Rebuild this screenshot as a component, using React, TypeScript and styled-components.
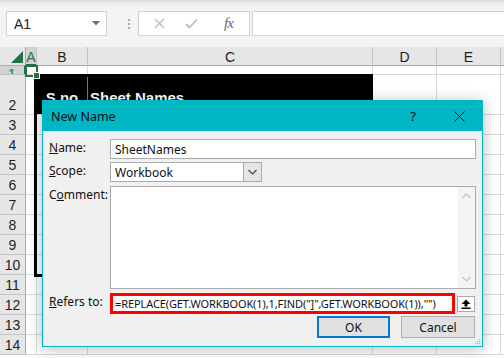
import { Fragment } from 'react'
import styled, { createGlobalStyle, css } from 'styled-components'

const GlobalStyle = createGlobalStyle`
  html, body { margin: 0; padding: 0; }
  body {
    width: 504px;
    height: 358px;
    overflow: hidden;
    background: #ffffff;
    font-family: "Noto Sans", "Liberation Sans", sans-serif;
  }
`

const green = '#217346'
const teal = '#00b7c3'
const uiFont = `"Noto Sans", "Liberation Sans", sans-serif`
const cellFont = `"Liberation Sans", "Noto Sans", sans-serif`

const Window = styled.div`
  position: relative;
  width: 504px;
  height: 358px;
  overflow: hidden;
  display: flex;
  flex-direction: column;
`

/* ---------- formula bar ---------- */

const Toolbar = styled.div`
  flex: none;
  height: 47px;
  box-sizing: border-box;
  display: flex;
  align-items: flex-start;
  padding: 11px 0 0 6px;
  background: linear-gradient(#d6d6d6 0, #ececec 3px, #f3f3f3 7px);
`

const NameBox = styled.div`
  width: 101px;
  height: 25px;
  box-sizing: border-box;
  border: 1px solid #d2d2d2;
  background: #fff;
  display: flex;
  align-items: center;
  justify-content: space-between;
  padding: 0 6px 0 7px;
  font-family: ${cellFont};
  font-size: 14px;
  color: #222;
`

const Grip = styled.div`
  width: 15px;
  height: 25px;
  margin: 0 0 0 14px;
  display: flex;
  flex-direction: column;
  justify-content: center;
  align-items: center;
  gap: 2px;
  & > span {
    width: 2px;
    height: 2px;
    background: #a8a8a8;
  }
`

const FxBox = styled.div`
  width: 112px;
  height: 25px;
  margin-left: 2px;
  box-sizing: border-box;
  border: 1px solid #d2d2d2;
  background: #fff;
  display: flex;
  align-items: center;
  padding-left: 15px;
  gap: 20px;
`

const FxText = styled.span`
  font-family: "Liberation Serif", serif;
  font-style: italic;
  font-size: 15px;
  color: #6a6a6a;
  margin-left: 6px;
  letter-spacing: -1px;
`

const FormulaInput = styled.div`
  flex: 1;
  height: 25px;
  margin-left: 2px;
  box-sizing: border-box;
  border: 1px solid #d2d2d2;
  border-right: none;
  background: #fff;
`

/* ---------- sheet grid ---------- */

const Sheet = styled.div`
  flex: 1;
  display: grid;
  grid-template-columns: 26px 11px 51px 285px 64px 64px 1fr;
  grid-template-rows: 19px 9px 40px repeat(13, 20px);
  overflow: hidden;
  font-family: ${cellFont};
`

const Corner = styled.div`
  grid-row: 1;
  grid-column: 1;
  background: #e6e6e6;
  border-right: 1px solid #ababab;
  border-bottom: 1px solid #ababab;
  box-sizing: border-box;
  display: flex;
  align-items: flex-end;
  justify-content: flex-end;
  padding: 0 2px 2px 0;
`

const ColHead = styled.div<{ $c: number; $active?: boolean }>`
  grid-row: 1;
  grid-column: ${({ $c }) => $c};
  box-sizing: border-box;
  background: ${({ $active }) => ($active ? '#d2d2d2' : '#e6e6e6')};
  border-right: 1px solid #c4c4c4;
  border-bottom: ${({ $active }) => ($active ? `2px solid ${green}` : '1px solid #ababab')};
  color: ${({ $active }) => ($active ? green : '#1e1e1e')};
  font-size: 14px;
  display: flex;
  align-items: center;
  justify-content: center;
  padding-top: 2px;
  overflow: hidden;
`

const RowHead = styled.div<{ $r: number; $active?: boolean }>`
  grid-row: ${({ $r }) => $r};
  grid-column: 1;
  box-sizing: border-box;
  background: ${({ $active }) => ($active ? '#d2d2d2' : '#e6e6e6')};
  border-right: ${({ $active }) => ($active ? `2px solid ${green}` : '1px solid #ababab')};
  border-bottom: 1px solid #c4c4c4;
  color: ${({ $active }) => ($active ? green : '#1e1e1e')};
  font-size: 14px;
  display: flex;
  align-items: ${({ $active }) => ($active ? 'flex-start' : 'flex-end')};
  justify-content: center;
  padding-bottom: 1px;
  line-height: 16px;
  overflow: hidden;
`

const Cell = styled.div<{ $r: number; $c: number; $dark?: boolean; $center?: boolean }>`
  grid-row: ${({ $r }) => $r};
  grid-column: ${({ $c }) => $c};
  box-sizing: border-box;
  border-right: 1px solid ${({ $dark }) => ($dark ? '#7a7a7a' : '#dadada')};
  border-bottom: 1px solid #dadada;
  display: flex;
  align-items: flex-end;
  justify-content: ${({ $center }) => ($center ? 'center' : 'flex-start')};
  padding: 0 2px;
  overflow: hidden;
  white-space: nowrap;
  ${({ $dark }) =>
    $dark &&
    css`
      background: #000;
      color: #fff;
      font-weight: bold;
      font-size: 15px;
      line-height: 18px;
      padding-bottom: 7px;
    `}
`

const TableFrame = styled.div`
  grid-row: 3 / 12;
  grid-column: 3 / 5;
  margin: -1px 0 -2px -3px;
  border: 3px solid #000;
  border-right-width: 1px;
  pointer-events: none;
  z-index: 1;
`

const Selection = styled.div`
  grid-row: 2 / 3;
  grid-column: 2 / 3;
  margin: -1px -1px -2px -1px;
  border: 2px solid ${green};
  position: relative;
  z-index: 2;
`

const FillHandle = styled.span`
  position: absolute;
  right: -4px;
  bottom: -4px;
  width: 5px;
  height: 5px;
  background: ${green};
  border: 1px solid #fff;
`

/* ---------- dialog ---------- */

const Dialog = styled.div`
  position: absolute;
  left: 42px;
  top: 100px;
  width: 441px;
  height: 247px;
  box-sizing: border-box;
  border: 1px solid ${teal};
  background: #f0f0f0;
  box-shadow: 0 2px 14px rgba(0, 0, 0, 0.28);
  display: flex;
  flex-direction: column;
  font-family: ${uiFont};
  font-size: 12px;
  color: #000;
  z-index: 5;
`

const TitleBar = styled.div`
  height: 30px;
  flex: none;
  background: ${teal};
  display: flex;
  align-items: center;
  padding-left: 8px;
  font-size: 12.5px;
`

const Title = styled.span`
  flex: 1;
  color: #0c0c0c;
`

const TitleButton = styled.div`
  width: 46px;
  height: 30px;
  display: flex;
  align-items: center;
  justify-content: center;
  font-size: 13px;
  color: #111;
`

const Body = styled.div`
  flex: 1;
  display: flex;
  flex-direction: column;
  padding: 8px 6px 0 6px;
`

const FieldRow = styled.div<{ $top: number }>`
  display: flex;
  align-items: flex-start;
  margin-top: ${({ $top }) => $top}px;
`

const Label = styled.label<{ $pad?: number }>`
  width: 61px;
  flex: none;
  padding-top: ${({ $pad }) => $pad ?? 1}px;
  line-height: 16px;
  color: #111;
`

const TextBox = styled.div<{ $height?: number; $alert?: boolean }>`
  flex: 1;
  height: ${({ $height }) => $height ?? 20}px;
  box-sizing: border-box;
  border: ${({ $alert }) => ($alert ? '3px solid #ff0000' : '1px solid #ababab')};
  background: #fff;
  display: flex;
  align-items: center;
  padding-left: ${({ $alert }) => ($alert ? 2 : 4)}px;
  white-space: nowrap;
  overflow: hidden;
  color: #111;
  ${({ $alert }) =>
    $alert &&
    css`
      font-size: 11px;
      letter-spacing: -0.1px;
    `}
`

const Select = styled.div`
  width: 152px;
  height: 20px;
  box-sizing: border-box;
  border: 1px solid #ababab;
  background: #fff;
  display: flex;
  align-items: stretch;
`

const SelectValue = styled.span`
  flex: 1;
  display: flex;
  align-items: center;
  padding-left: 4px;
  color: #111;
`

const SelectButton = styled.span`
  width: 17px;
  background: #e5e5e5;
  border-left: 1px solid #ababab;
  display: flex;
  align-items: center;
  justify-content: center;
`

const Comment = styled.div`
  flex: 1;
  height: 103px;
  box-sizing: border-box;
  border: 1px solid #ababab;
  background: #fff;
  display: flex;
  justify-content: flex-end;
`

const ScrollBar = styled.div`
  width: 17px;
  background: #f4f4f4;
  display: flex;
  flex-direction: column;
  justify-content: space-between;
  align-items: center;
  padding: 6px 0;
`

const CollapseButton = styled.div`
  width: 18px;
  height: 16px;
  margin: 3px 1px 0 2px;
  box-sizing: border-box;
  border: 1px solid #ababab;
  background: #fdfdfd;
  display: flex;
  align-items: center;
  justify-content: center;
`

const ButtonRow = styled.div`
  display: flex;
  justify-content: flex-end;
  gap: 11px;
  margin: 2px 1px 0 0;
`

const Button = styled.div<{ $primary?: boolean }>`
  width: ${({ $primary }) => ($primary ? 73 : 74)}px;
  height: 22px;
  box-sizing: border-box;
  background: #e1e1e1;
  border: ${({ $primary }) => ($primary ? '2px solid #0078d7' : '1px solid #adadad')};
  display: flex;
  align-items: center;
  justify-content: center;
  color: #111;
`

const ResizeGrip = styled.svg`
  position: absolute;
  right: 1px;
  bottom: 1px;
`

const columns = ['A', 'B', 'C', 'D', 'E', '']
const rowNumbers = Array.from({ length: 13 }, (_, i) => i + 2)

function Chevron({ up, color }: { up?: boolean; color: string }) {
  return (
    <svg width="9" height="6" viewBox="0 0 9 6">
      <path
        d={up ? 'M0.5 5 L4.5 1 L8.5 5' : 'M0.5 1 L4.5 5 L8.5 1'}
        fill="none"
        stroke={color}
        strokeWidth="1.2"
      />
    </svg>
  )
}

export default function App() {
  return (
    <Window>
      <GlobalStyle />
      <Toolbar>
        <NameBox>
          <span>A1</span>
          <svg width="8" height="5" viewBox="0 0 8 5">
            <path d="M0 0 L8 0 L4 4.5 Z" fill="#707070" />
          </svg>
        </NameBox>
        <Grip>
          <span />
          <span />
          <span />
        </Grip>
        <FxBox>
          <svg width="11" height="11" viewBox="0 0 11 11">
            <path d="M1 1 L10 10 M10 1 L1 10" stroke="#bdbdbd" strokeWidth="1.4" />
          </svg>
          <svg width="13" height="11" viewBox="0 0 13 11">
            <path d="M1 6 L4.5 9.5 L12 1.5" fill="none" stroke="#bdbdbd" strokeWidth="1.8" />
          </svg>
          <FxText>fx</FxText>
        </FxBox>
        <FormulaInput />
      </Toolbar>

      <Sheet>
        <Corner>
          <svg width="12" height="12" viewBox="0 0 12 12">
            <path d="M12 0 L12 12 L0 12 Z" fill={green} />
          </svg>
        </Corner>
        {columns.map((c, i) => (
          <ColHead key={'col' + i} $c={i + 2} $active={c === 'A'}>
            {c}
          </ColHead>
        ))}

        <RowHead $r={2} $active>
          1
        </RowHead>
        {columns.map((_, i) => (
          <Cell key={'r1-' + i} $r={2} $c={i + 2} />
        ))}

        {rowNumbers.map((n) => (
          <Fragment key={'row' + n}>
            <RowHead $r={n + 1}>{n}</RowHead>
            {columns.map((c, i) => {
              const dark = n === 2 && (c === 'B' || c === 'C')
              return (
                <Cell key={n + '-' + i} $r={n + 1} $c={i + 2} $dark={dark} $center={c === 'B'}>
                  {n === 2 && c === 'B' && 'S.no'}
                  {n === 2 && c === 'C' && 'Sheet Names'}
                </Cell>
              )
            })}
          </Fragment>
        ))}

        <TableFrame />
        <Selection>
          <FillHandle />
        </Selection>
      </Sheet>

      <Dialog>
        <TitleBar>
          <Title>New Name</Title>
          <TitleButton>?</TitleButton>
          <TitleButton>
            <svg width="11" height="11" viewBox="0 0 11 11">
              <path d="M0.5 0.5 L10.5 10.5 M10.5 0.5 L0.5 10.5" stroke="#111" strokeWidth="1" />
            </svg>
          </TitleButton>
        </TitleBar>
        <Body>
          <FieldRow $top={0}>
            <Label>
              <u>N</u>ame:
            </Label>
            <TextBox>SheetNames</TextBox>
          </FieldRow>
          <FieldRow $top={3}>
            <Label>
              <u>S</u>cope:
            </Label>
            <Select>
              <SelectValue>Workbook</SelectValue>
              <SelectButton>
                <Chevron color="#444" />
              </SelectButton>
            </Select>
          </FieldRow>
          <FieldRow $top={4}>
            <Label>
              C<u>o</u>mment:
            </Label>
            <Comment>
              <ScrollBar>
                <Chevron up color="#c2c2c2" />
                <Chevron color="#c2c2c2" />
              </ScrollBar>
            </Comment>
          </FieldRow>
          <FieldRow $top={4}>
            <Label $pad={1}>
              <u>R</u>efers to:
            </Label>
            <TextBox $height={21} $alert>
              =REPLACE(GET.WORKBOOK(1),1,FIND("]",GET.WORKBOOK(1)),"")
            </TextBox>
            <CollapseButton>
              <svg width="10" height="10" viewBox="0 0 10 10">
                <path d="M5 0.5 L9.5 5 L6.5 5 L6.5 7.5 L3.5 7.5 L3.5 5 L0.5 5 Z" fill="#000" />
                <rect x="0.5" y="8.5" width="9" height="1.5" fill="#000" />
              </svg>
            </CollapseButton>
          </FieldRow>
          <ButtonRow>
            <Button $primary>OK</Button>
            <Button>Cancel</Button>
          </ButtonRow>
        </Body>
        <ResizeGrip width="8" height="8" viewBox="0 0 8 8">
          <g fill="#b0b0b0">
            <rect x="6" y="2" width="1.2" height="1.2" />
            <rect x="4" y="4" width="1.2" height="1.2" />
            <rect x="6" y="4" width="1.2" height="1.2" />
            <rect x="2" y="6" width="1.2" height="1.2" />
            <rect x="4" y="6" width="1.2" height="1.2" />
            <rect x="6" y="6" width="1.2" height="1.2" />
          </g>
        </ResizeGrip>
      </Dialog>
    </Window>
  )
}
